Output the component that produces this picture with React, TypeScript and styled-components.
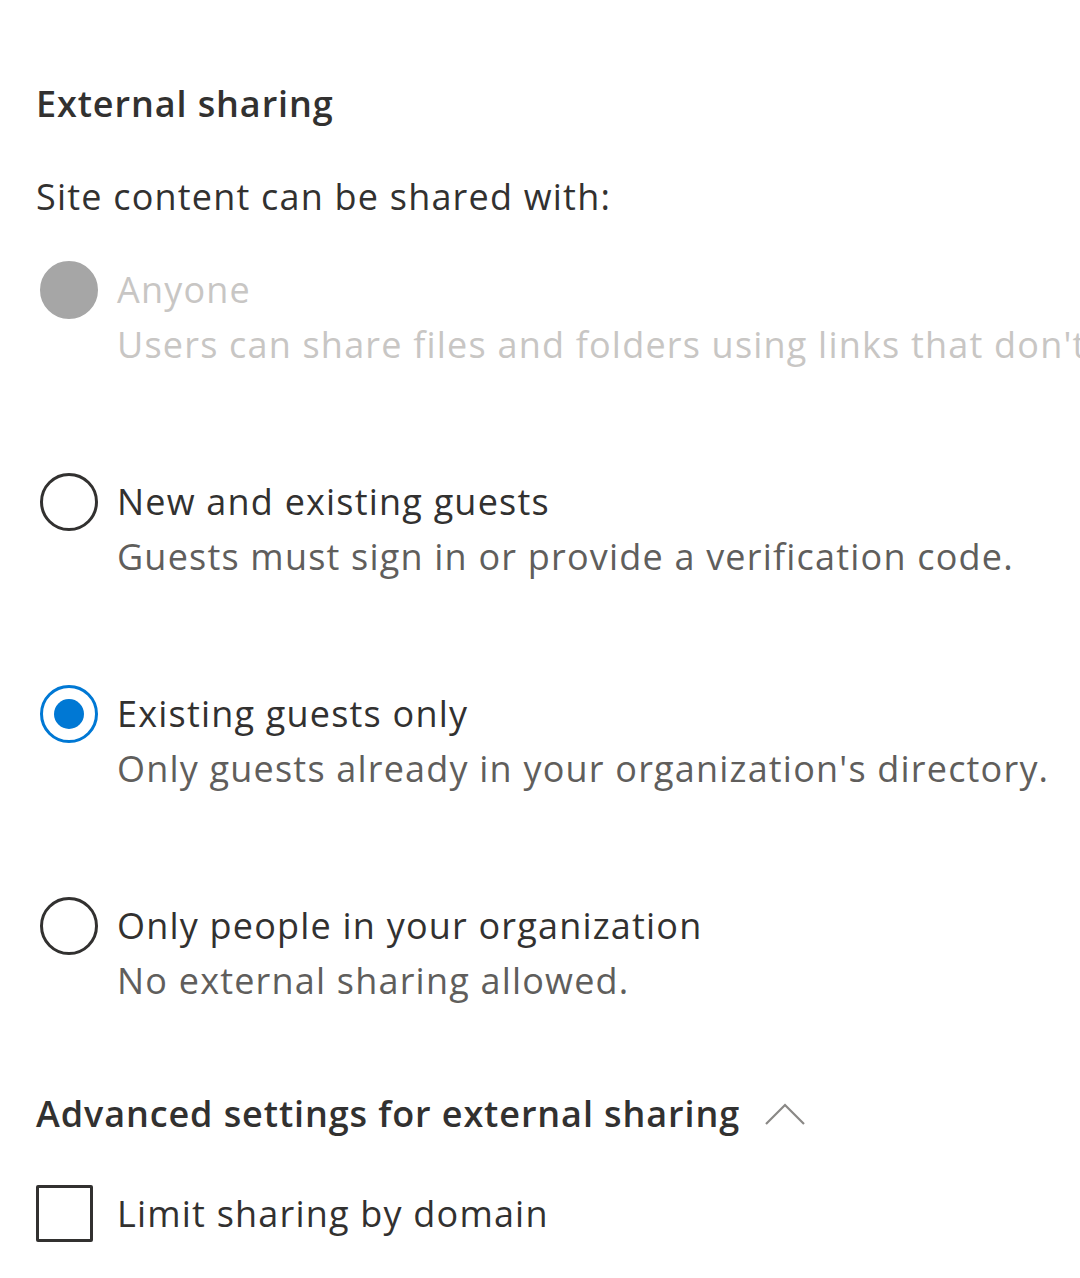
import styled, { createGlobalStyle } from 'styled-components';

const GlobalStyle = createGlobalStyle`
  html, body {
    margin: 0;
    padding: 0;
    background: #ffffff;
  }
  body {
    font-family: "Open Sans", "Noto Sans", sans-serif;
    color: #323130;
    overflow: hidden;
  }
`;

const Panel = styled.div`
  width: 1080px;
  height: 1278px;
  overflow: hidden;
  box-sizing: border-box;
  padding: 76px 0 0 36px;
  display: flex;
  flex-direction: column;
`;

const SectionTitle = styled.h2`
  margin: 0;
  font-size: 36px;
  line-height: 55px;
  font-weight: 600;
  letter-spacing: 0.9px;
  color: #323130;
  white-space: nowrap;
  display: flex;
  align-items: center;
  gap: 24px;
`;

const Intro = styled.p`
  margin: 38px 0 0;
  font-size: 36px;
  line-height: 55px;
  letter-spacing: 1.2px;
  color: #323130;
  white-space: nowrap;
`;

const OptionList = styled.div`
  display: flex;
  flex-direction: column;
  gap: 102px;
  margin-top: 38px;
`;

const Option = styled.label<{ $disabled?: boolean }>`
  display: flex;
  align-items: flex-start;
  gap: 19px;
  padding-left: 4px;
  cursor: ${(p) => (p.$disabled ? 'default' : 'pointer')};
`;

const RadioCircle = styled.span<{ $checked?: boolean; $disabled?: boolean }>`
  flex: none;
  width: 58px;
  height: 58px;
  margin-top: -1px;
  box-sizing: border-box;
  border-radius: 50%;
  border: 3px solid
    ${(p) => (p.$disabled ? '#a6a6a6' : p.$checked ? '#0078d4' : '#323130')};
  background: ${(p) => (p.$disabled ? '#a6a6a6' : '#ffffff')};
  display: flex;
  align-items: center;
  justify-content: center;

  &::after {
    content: '';
    display: ${(p) => (p.$checked ? 'block' : 'none')};
    width: 30px;
    height: 30px;
    border-radius: 50%;
    background: #0078d4;
  }
`;

const OptionText = styled.span`
  display: flex;
  flex-direction: column;
  white-space: nowrap;
`;

const OptionLabel = styled.span<{ $disabled?: boolean }>`
  font-size: 36px;
  line-height: 55px;
  letter-spacing: 1.2px;
  color: ${(p) => (p.$disabled ? '#c8c6c4' : '#323130')};
`;

const OptionDesc = styled.span<{ $disabled?: boolean }>`
  font-size: 36px;
  line-height: 55px;
  letter-spacing: 1.2px;
  color: ${(p) => (p.$disabled ? '#c8c6c4' : '#605e5c')};
`;

const Advanced = styled.div`
  margin-top: 78px;
  display: flex;
  flex-direction: column;
  gap: 44px;
`;

const CheckRow = styled.label`
  display: flex;
  align-items: center;
  gap: 24px;
`;

const CheckBox = styled.span`
  flex: none;
  width: 57px;
  height: 57px;
  box-sizing: border-box;
  border: 3px solid #323130;
  border-radius: 2px;
  background: #ffffff;
`;

const CheckLabel = styled.span`
  font-size: 36px;
  line-height: 55px;
  letter-spacing: 1.2px;
  color: #323130;
  white-space: nowrap;
`;

type SharingOption = {
  label: string;
  desc: string;
  checked?: boolean;
  disabled?: boolean;
};

const options: SharingOption[] = [
  {
    label: 'Anyone',
    desc: "Users can share files and folders using links that don't require sign-in.",
    disabled: true,
  },
  {
    label: 'New and existing guests',
    desc: 'Guests must sign in or provide a verification code.',
  },
  {
    label: 'Existing guests only',
    desc: "Only guests already in your organization's directory.",
    checked: true,
  },
  {
    label: 'Only people in your organization',
    desc: 'No external sharing allowed.',
  },
];

const ChevronUp = () => (
  <svg width="42" height="24" viewBox="0 0 42 24" fill="none">
    <path d="M2 22 L21 3 L40 22" stroke="#8a8886" strokeWidth="2.2" />
  </svg>
);

export default function App() {
  return (
    <>
      <GlobalStyle />
      <Panel>
        <SectionTitle>External sharing</SectionTitle>
        <Intro>Site content can be shared with:</Intro>
        <OptionList>
          {options.map((o) => (
            <Option key={o.label} $disabled={o.disabled}>
              <RadioCircle $checked={o.checked} $disabled={o.disabled} />
              <OptionText>
                <OptionLabel $disabled={o.disabled}>{o.label}</OptionLabel>
                <OptionDesc $disabled={o.disabled}>{o.desc}</OptionDesc>
              </OptionText>
            </Option>
          ))}
        </OptionList>
        <Advanced>
          <SectionTitle>
            Advanced settings for external sharing
            <ChevronUp />
          </SectionTitle>
          <CheckRow>
            <CheckBox />
            <CheckLabel>Limit sharing by domain</CheckLabel>
          </CheckRow>
        </Advanced>
      </Panel>
    </>
  );
}
